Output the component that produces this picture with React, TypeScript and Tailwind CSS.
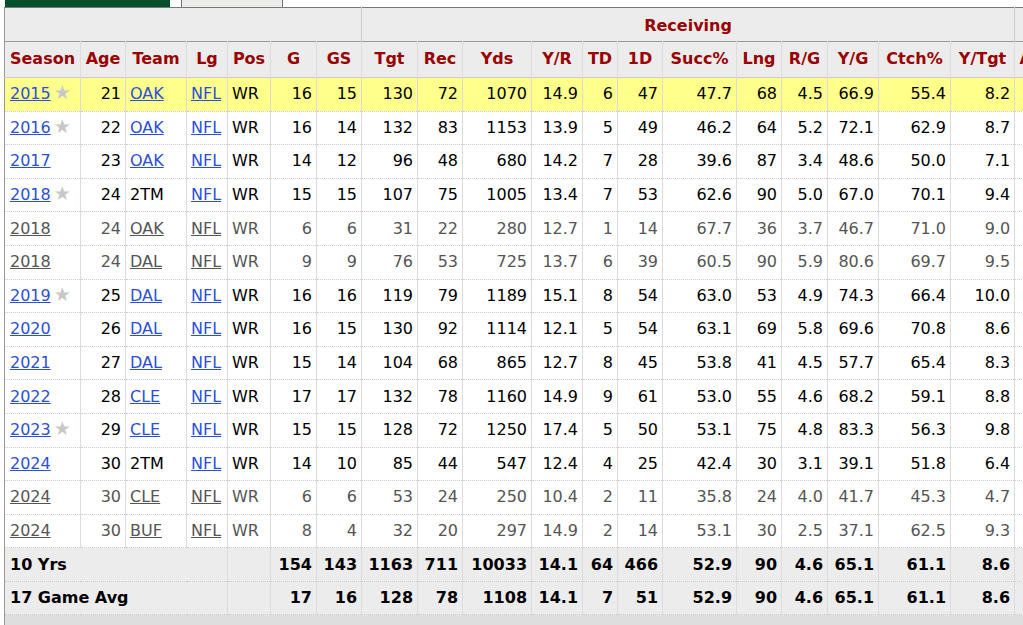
import React from "react";

type Row = {
  year: string;
  star?: boolean;
  age: string;
  team: string;
  teamLink: boolean;
  partial?: boolean;
  hl?: boolean;
  stats: string[];
};

const cols = [
  { key: "Season", w: 76, left: true },
  { key: "Age", w: 45 },
  { key: "Team", w: 61, left: true },
  { key: "Lg", w: 41, left: true },
  { key: "Pos", w: 43, left: true },
  { key: "G", w: 46 },
  { key: "GS", w: 45 },
  { key: "Tgt", w: 56 },
  { key: "Rec", w: 45 },
  { key: "Yds", w: 69 },
  { key: "Y/R", w: 51 },
  { key: "TD", w: 35 },
  { key: "1D", w: 45 },
  { key: "Succ%", w: 74 },
  { key: "Lng", w: 45 },
  { key: "R/G", w: 46 },
  { key: "Y/G", w: 51 },
  { key: "Ctch%", w: 72 },
  { key: "Y/Tgt", w: 64 },
  { key: "ADOT", w: 60 },
];

const rows: Row[] = [
  { year: "2015", star: true, age: "21", team: "OAK", teamLink: true, hl: true, stats: ["16", "15", "130", "72", "1070", "14.9", "6", "47", "47.7", "68", "4.5", "66.9", "55.4", "8.2"] },
  { year: "2016", star: true, age: "22", team: "OAK", teamLink: true, stats: ["16", "14", "132", "83", "1153", "13.9", "5", "49", "46.2", "64", "5.2", "72.1", "62.9", "8.7"] },
  { year: "2017", age: "23", team: "OAK", teamLink: true, stats: ["14", "12", "96", "48", "680", "14.2", "7", "28", "39.6", "87", "3.4", "48.6", "50.0", "7.1"] },
  { year: "2018", star: true, age: "24", team: "2TM", teamLink: false, stats: ["15", "15", "107", "75", "1005", "13.4", "7", "53", "62.6", "90", "5.0", "67.0", "70.1", "9.4"] },
  { year: "2018", age: "24", team: "OAK", teamLink: true, partial: true, stats: ["6", "6", "31", "22", "280", "12.7", "1", "14", "67.7", "36", "3.7", "46.7", "71.0", "9.0"] },
  { year: "2018", age: "24", team: "DAL", teamLink: true, partial: true, stats: ["9", "9", "76", "53", "725", "13.7", "6", "39", "60.5", "90", "5.9", "80.6", "69.7", "9.5"] },
  { year: "2019", star: true, age: "25", team: "DAL", teamLink: true, stats: ["16", "16", "119", "79", "1189", "15.1", "8", "54", "63.0", "53", "4.9", "74.3", "66.4", "10.0"] },
  { year: "2020", age: "26", team: "DAL", teamLink: true, stats: ["16", "15", "130", "92", "1114", "12.1", "5", "54", "63.1", "69", "5.8", "69.6", "70.8", "8.6"] },
  { year: "2021", age: "27", team: "DAL", teamLink: true, stats: ["15", "14", "104", "68", "865", "12.7", "8", "45", "53.8", "41", "4.5", "57.7", "65.4", "8.3"] },
  { year: "2022", age: "28", team: "CLE", teamLink: true, stats: ["17", "17", "132", "78", "1160", "14.9", "9", "61", "53.0", "55", "4.6", "68.2", "59.1", "8.8"] },
  { year: "2023", star: true, age: "29", team: "CLE", teamLink: true, stats: ["15", "15", "128", "72", "1250", "17.4", "5", "50", "53.1", "75", "4.8", "83.3", "56.3", "9.8"] },
  { year: "2024", age: "30", team: "2TM", teamLink: false, stats: ["14", "10", "85", "44", "547", "12.4", "4", "25", "42.4", "30", "3.1", "39.1", "51.8", "6.4"] },
  { year: "2024", age: "30", team: "CLE", teamLink: true, partial: true, stats: ["6", "6", "53", "24", "250", "10.4", "2", "11", "35.8", "24", "4.0", "41.7", "45.3", "4.7"] },
  { year: "2024", age: "30", team: "BUF", teamLink: true, partial: true, stats: ["8", "4", "32", "20", "297", "14.9", "2", "14", "53.1", "30", "2.5", "37.1", "62.5", "9.3"] },
];

const totals = [
  { label: "10 Yrs", stats: ["154", "143", "1163", "711", "10033", "14.1", "64", "466", "52.9", "90", "4.6", "65.1", "61.1", "8.6"] },
  { label: "17 Game Avg", stats: ["17", "16", "128", "78", "1108", "14.1", "7", "51", "52.9", "90", "4.6", "65.1", "61.1", "8.6"] },
];

const cell = "border-r border-r-[#dcdcdc] px-[4px] whitespace-nowrap";

export default function App() {
  const tableW = cols.reduce((s, c) => s + c.w, 0);
  return (
    <div
      className="w-[1023px] h-[625px] overflow-hidden bg-white text-[16px] text-black"
      style={{ fontFamily: '"DejaVu Sans", Verdana, sans-serif' }}
    >
      {/* tabs strip */}
      <div className="flex h-[7px] pl-[5px]">
        <div className="w-[165px] bg-[#00502b]" />
        <div className="w-[11px]" />
        <div className="w-[102px] bg-[#ebecea] border-x border-[#777]" />
      </div>

      <div className="pl-[4px]">
        <table
          className="table-fixed border-collapse border-l border-l-[#999] border-t border-t-[#777]"
          style={{ width: tableW }}
        >
          <colgroup>
            {cols.map((c) => (
              <col key={c.key} style={{ width: c.w }} />
            ))}
          </colgroup>
          <thead className="bg-[#ececec] font-bold text-[#990000]">
            <tr className="h-[34px] border-b border-b-[#999]">
              <th colSpan={7} className="border-r border-r-[#ccc]" />
              <th colSpan={12} className="border-r border-r-[#ccc] text-center font-bold pt-[2px]">
                Receiving
              </th>
              <th />
            </tr>
            <tr className="h-[36px] border-b border-b-[#ccc]">
              {cols.map((c) => (
                <th key={c.key} className={`${cell} text-center font-bold pb-[2px]`}>
                  {c.key}
                </th>
              ))}
            </tr>
          </thead>
          <tbody>
            {rows.map((r, i) => {
              const link = r.partial
                ? "underline text-[#555]"
                : "underline text-[#2b4fd8]";
              return (
                <tr
                  key={i}
                  className={`h-[33.6px] border-b border-dotted border-b-[#ccc] ${
                    r.hl ? "bg-[#ffff8c]" : ""
                  } ${r.partial ? "text-[#555]" : ""}`}
                >
                  <td className={`${cell} text-left pl-[5px]`}>
                    <span className={link}>{r.year}</span>
                    {r.star && (
                      <span className="ml-[3px] text-[19px] leading-none text-[#c8c8c8]">★</span>
                    )}
                  </td>
                  <td className={`${cell} text-right`}>{r.age}</td>
                  <td className={`${cell} text-left`}>
                    {r.teamLink ? <span className={link}>{r.team}</span> : r.team}
                  </td>
                  <td className={`${cell} text-left`}>
                    <span className={link}>NFL</span>
                  </td>
                  <td className={`${cell} text-left`}>WR</td>
                  {r.stats.map((s, j) => (
                    <td key={j} className={`${cell} text-right`}>
                      {s}
                    </td>
                  ))}
                  <td className={cell} />
                </tr>
              );
            })}
          </tbody>
          <tfoot className="bg-[#ececec] font-bold">
            {totals.map((t, i) => (
              <tr
                key={t.label}
                className={`h-[33.5px] border-b border-dotted border-b-[#ccc] ${
                  i === 0 ? "border-t border-t-[#999]" : ""
                }`}
              >
                <td colSpan={4} className="px-[5px] text-left whitespace-nowrap border-r border-r-[#dcdcdc]">
                  {t.label}
                </td>
                <td className={cell} />
                {t.stats.map((s, j) => (
                  <td key={j} className={`${cell} text-right`}>
                    {s}
                  </td>
                ))}
                <td className={cell} />
              </tr>
            ))}
          </tfoot>
        </table>
        <div className="h-[20px] bg-[#dedede] border-l border-l-[#999]" />
      </div>
    </div>
  );
}
